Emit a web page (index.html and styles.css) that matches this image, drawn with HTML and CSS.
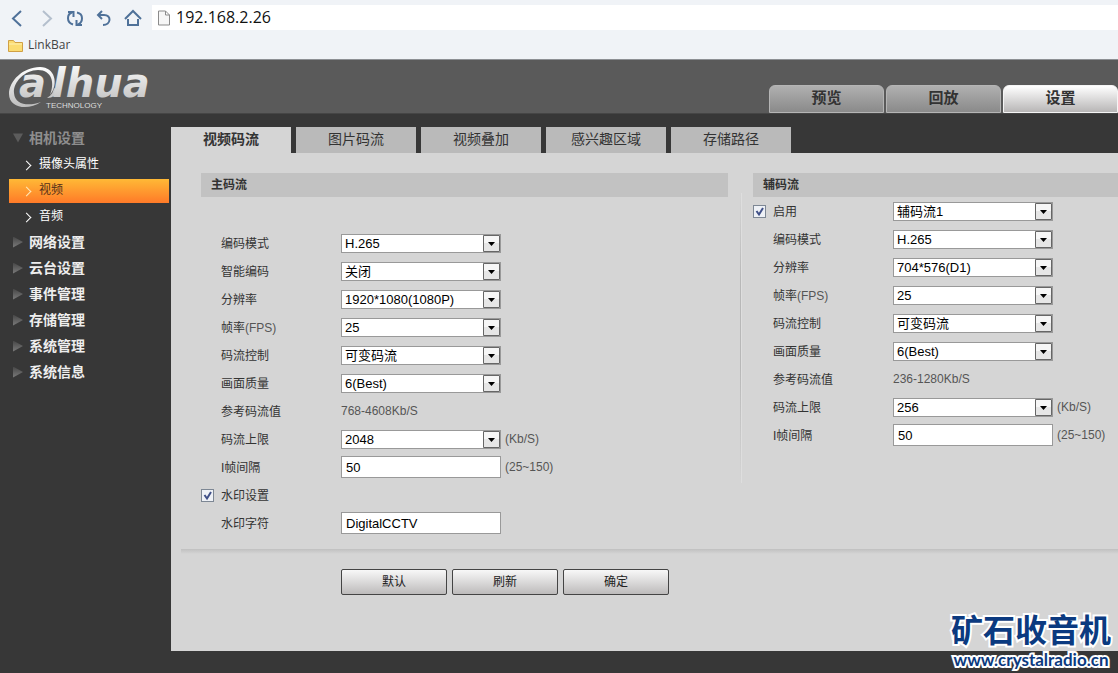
FILE: index.html
```html
<!DOCTYPE html>
<html lang="zh-CN">
<head>
	<meta charset="UTF-8">
	<meta name="viewport" content="width=device-width, initial-scale=1.0">
	<title>设置</title>
	<link rel="stylesheet" href="styles.css">
</head>
<body>
	<div class="browser">
		<div class="toolbar">
			<button class="tool" aria-label="后退"><svg width="20" height="20" viewBox="0 0 20 20"><path d="M14 3L6 10.500L14 18" stroke="#4f7199" stroke-width="2"/></svg></button>
			<button class="tool" aria-label="前进"><svg width="20" height="20" viewBox="0 0 20 20"><path d="M7 3L15 10.500L7 18" stroke="#b4bfcd" stroke-width="2"/></svg></button>
			<button class="tool" aria-label="刷新"><svg width="20" height="20" viewBox="0 0 20 20"><path d="M8 16.500C1 14 2 6 7 4.500M3 4H8.500V9M12 4.500C19 6 18 14 13 16.500M17 17H11.500V12" stroke="#4f7199" stroke-width="2"/></svg></button>
			<button class="tool" aria-label="恢复"><svg width="20" height="20" viewBox="0 0 20 20"><path d="M8 3L4 7L8 11M4 7H10C18 7 17 17 9 17" stroke="#4f7199" stroke-width="2"/></svg></button>
			<button class="tool" aria-label="主页"><svg width="20" height="20" viewBox="0 0 20 20"><path d="M2 11L10 3L18 11M5 11V17H15V11" stroke="#4f7199" stroke-width="2"/></svg></button>
			<div class="address">
				<svg width="12" height="16" viewBox="0 0 12 16"><path d="M.5 1H7.500L11.500 5V15H.5ZM7.500 1V5H11.500" fill="#f6f6f6" stroke="#8b8b8b"/></svg>
				<input class="url" type="text" aria-label="地址" value="192.168.2.26">
			</div>
		</div>
		<div class="bookmarks">
			<a class="bookmark" href="#">
				<svg width="15" height="13" viewBox="0 0 15 13"><path d="M.5 1.500H5.500L7 3.500H14.500V12.500H.5Z" fill="#fbdc72" stroke="#d0a045"/><path d="M1 5H14" stroke="#fff0b0"/></svg>
				LinkBar
			</a>
		</div>
	</div>

	<header class="header">
		<svg class="logo" width="144" height="46" viewBox="0 0 144 46" role="img" aria-label="alhua TECHNOLOGY">
			<defs>
				<linearGradient id="silver" x1="0" y1="0" x2="0" y2="1">
					<stop offset="0" stop-color="#fff"/>
					<stop offset="1" stop-color="#bdbdbd"/>
				</linearGradient>
			</defs>
			<path d="M42 31C51 20 47 3 32 3C15 3 1 17 1 30C1 44 20 47 33 38C22 42 7 42 6 29C5 18 17 6 30 6C44 6 47 19 42 31Z" fill="url(#silver)"/>
			<path d="M49 26C48 31 45 34 39 34C44 31 45 28 46 24Z" fill="#c8c8c8"/>
			<text class="logo-name" x="11" y="33" fill="url(#silver)">a<tspan x="44">lhua</tspan></text>
			<text class="logo-sub" x="38" y="44">TECHNOLOGY</text>
		</svg>
		<nav class="main-nav">
			<a class="main-tab" href="#">预览</a>
			<a class="main-tab" href="#">回放</a>
			<a class="main-tab active" href="#">设置</a>
		</nav>
	</header>

	<div class="page">
		<nav class="sidebar">
			<a class="menu open" href="#">相机设置</a>
			<a class="submenu" href="#">摄像头属性</a>
			<a class="submenu active" href="#">视频</a>
			<a class="submenu" href="#">音频</a>
			<a class="menu" href="#">网络设置</a>
			<a class="menu" href="#">云台设置</a>
			<a class="menu" href="#">事件管理</a>
			<a class="menu" href="#">存储管理</a>
			<a class="menu" href="#">系统管理</a>
			<a class="menu" href="#">系统信息</a>
		</nav>

		<main class="content">
			<nav class="tabs">
				<a class="tab active" href="#">视频码流</a>
				<a class="tab" href="#">图片码流</a>
				<a class="tab" href="#">视频叠加</a>
				<a class="tab" href="#">感兴趣区域</a>
				<a class="tab" href="#">存储路径</a>
			</nav>

			<form class="panel">
				<div class="streams">
					<section class="stream">
						<h2 class="title">主码流</h2>
						<div class="rows main-rows">
							<div class="row"><label for="mode">编码模式</label><select id="mode"><option>H.265</option></select></div>
							<div class="row"><label for="smart">智能编码</label><select id="smart"><option>关闭</option></select></div>
							<div class="row"><label for="size">分辨率</label><select id="size"><option>1920*1080(1080P)</option></select></div>
							<div class="row"><label for="fps">帧率<span class="unit">(FPS)</span></label><select id="fps"><option>25</option></select></div>
							<div class="row"><label for="control">码流控制</label><select id="control"><option>可变码流</option></select></div>
							<div class="row"><label for="quality">画面质量</label><select id="quality"><option>6(Best)</option></select></div>
							<div class="row"><span class="name">参考码流值</span><span class="unit">768-4608Kb/S</span></div>
							<div class="row"><label for="limit">码流上限</label><select id="limit"><option>2048</option></select><span class="unit">(Kb/S)</span></div>
							<div class="row"><label for="interval">I帧间隔</label><input class="text" type="text" id="interval" value="50"><span class="unit">(25~150)</span></div>
							<div class="row"><input class="check" type="checkbox" id="watermark" checked><label for="watermark">水印设置</label></div>
							<div class="row"><label for="chars">水印字符</label><input class="text" type="text" id="chars" value="DigitalCCTV"></div>
						</div>
					</section>
					<div class="divider"></div>
					<section class="stream sub">
						<h2 class="title">辅码流</h2>
						<div class="rows">
							<div class="row"><input class="check" type="checkbox" id="enable" checked><label for="enable">启用</label><select aria-label="辅码流"><option>辅码流1</option></select></div>
							<div class="row"><label for="mode2">编码模式</label><select id="mode2"><option>H.265</option></select></div>
							<div class="row"><label for="size2">分辨率</label><select id="size2"><option>704*576(D1)</option></select></div>
							<div class="row"><label for="fps2">帧率<span class="unit">(FPS)</span></label><select id="fps2"><option>25</option></select></div>
							<div class="row"><label for="control2">码流控制</label><select id="control2"><option>可变码流</option></select></div>
							<div class="row"><label for="quality2">画面质量</label><select id="quality2"><option>6(Best)</option></select></div>
							<div class="row"><span class="name">参考码流值</span><span class="unit">236-1280Kb/S</span></div>
							<div class="row"><label for="limit2">码流上限</label><select id="limit2"><option>256</option></select><span class="unit">(Kb/S)</span></div>
							<div class="row"><label for="interval2">I帧间隔</label><input class="text" type="text" id="interval2" value="50"><span class="unit">(25~150)</span></div>
						</div>
					</section>
				</div>
				<div class="line"></div>
				<div class="buttons">
					<button class="btn" type="button">默认</button>
					<button class="btn" type="button">刷新</button>
					<button class="btn" type="button">确定</button>
				</div>
			</form>
		</main>
	</div>

	<div class="stamp">
		<div class="stamp-name">矿石收音机</div>
		<div class="stamp-url">www.crystalradio.cn</div>
	</div>
</body>
</html>
```
FILE: styles.css
```css
* {
    box-sizing: border-box;
}
body {
    margin: 0;
    position: relative;
    min-height: 100vh;
    background-color: #373737;
    font-family: "Liberation Sans", "Noto Sans CJK SC", sans-serif;
    font-size: 12px;
    color: #333;
}
a {
    color: inherit;
    text-decoration: none;
}
/* browser bars */
.browser {
    height: 60px;
    background: #f0f3f7;
    border-bottom: 1px solid #8d9094;
    font-family: "Open Sans", sans-serif;
}
.toolbar {
    display: flex;
    align-items: center;
    gap: 9px;
    padding: 5px 0 0 7px;
}
.tool {
    width: 20px;
    height: 20px;
    padding: 0;
    border: none;
    background: none;
}
.tool svg {
    display: block;
    fill: none;
}
.address {
    flex: 1;
    display: flex;
    align-items: center;
    gap: 6px;
    height: 25px;
    padding-left: 6px;
    background: #fff;
}
.url {
    flex: 1;
    height: 25px;
    padding: 0 0 2px;
    border: none;
    background: none;
    font-family: inherit;
    font-size: 16px;
    color: #111;
}
.bookmarks {
    display: flex;
    padding: 6px 8px;
}
.bookmark {
    display: flex;
    align-items: center;
    gap: 5px;
    line-height: 18px;
    color: #444;
}
/* header */
.header {
    display: flex;
    justify-content: space-between;
    align-items: flex-end;
    height: 54px;
    background: #5a5a5a;
    border-bottom: 1px solid #454545;
    padding-left: 8px;
}
.logo {
    align-self: center;
    overflow: visible;
}
.logo-name {
    font: italic bold 40px "DejaVu Sans", sans-serif;
}
.logo-sub {
    font: 8px "Liberation Sans", sans-serif;
    fill: #ddd;
}
.main-nav {
    display: flex;
    gap: 2px;
}
.main-tab {
    width: 115px;
    height: 28px;
    line-height: 24px;
    border: 1px solid #b5b5b5;
    border-radius: 6px 6px 0 0;
    background: linear-gradient(#b0b0b0, #8a8a8a);
    text-align: center;
    font-size: 15px;
    font-weight: bold;
}
.main-tab.active {
    border-color: #f5f5f5;
    background: linear-gradient(#fff, #b8b6b6);
}
/* layout */
.page {
    display: flex;
    align-items: flex-start;
}
.sidebar {
    display: flex;
    flex-direction: column;
    width: 171px;
    padding: 12px 2px 12px 9px;
}
.menu,
.submenu {
    display: flex;
    align-items: center;
    line-height: 22px;
    color: #fff;
}
.menu {
    height: 26px;
    padding: 0 0 2px 4px;
    font-size: 14px;
    font-weight: bold;
    color: #eee;
}
.menu::before {
    content: "";
    width: 10px;
    height: 11px;
    margin-right: 6px;
    background: linear-gradient(#484848, #7c7c7c);
    clip-path: polygon(0 0, 100% 50%, 0 100%);
}
.menu.open {
    color: #8e8e8e;
}
.menu.open::before {
    background: #5c5c5c;
    clip-path: polygon(0 10%, 100% 10%, 50% 90%);
}
.submenu {
    height: 24px;
    margin: 1px 0;
    padding: 0 0 2px 14px;
}
.submenu::before {
    content: "";
    width: 6px;
    height: 6px;
    margin: 2px 9px 0 0;
    border: solid #fff;
    border-width: 1px 1px 0 0;
    transform: rotate(45deg);
}
.submenu.active {
    background: linear-gradient(#ffb936, #ff7a28);
    color: #54301a;
}
.submenu.active::before {
    border-color: #ffe9b8;
}
.content {
    flex: 1;
    min-width: 0;
    padding-top: 13px;
}
.tabs {
    display: flex;
    gap: 5px;
}
.tab {
    width: 120px;
    height: 26px;
    line-height: 24px;
    background: #bababa;
    text-align: center;
    font-size: 14px;
}
.tab.active {
    background: #d5d5d5;
    font-weight: bold;
}
.panel {
    padding: 20px 0 56px;
    background: #d5d5d5;
}
/* streams */
.streams {
    display: flex;
    padding-left: 30px;
}
.stream {
    flex: 1;
    min-width: 330px;
}
.stream.sub {
    flex: 0 0 365px;
}
.title {
    margin: 0;
    padding-left: 10px;
    line-height: 24px;
    background: #c2c2c2;
    font-size: 12px;
}
.divider {
    width: 2px;
    height: 290px;
    margin: 20px 11px 0 12px;
    background: linear-gradient(#d5d5d5, #b8b8b8 30%, #b8b8b8 60%, #d5d5d5);
    border-right: 1px solid #dedede;
}
.main-rows {
    padding-top: 32px;
}
.row {
    display: grid;
    grid-template-columns: 20px 120px 160px 1fr;
    align-items: center;
    height: 28px;
}
.row label,
.row .name {
    grid-column: 2;
    padding-bottom: 2px;
}
.row > .unit {
    padding-left: 4px;
}
.row .name + .unit {
    padding-left: 0;
}
.unit {
    color: #555;
}
select,
.text {
    width: 160px;
    border: 1px solid #999;
    border-radius: 0;
    background-color: #fff;
    font-family: inherit;
    font-size: 13px;
    color: #000;
}
select {
    appearance: none;
    height: 19px;
    padding: 0 18px 0 3px;
    background-image: url("data:image/svg+xml,%3Csvg xmlns='http://www.w3.org/2000/svg' width='17' height='17'%3E%3Cpath d='M.5 .5H16.5V16.5H.5Z' fill='%23e6e6e6' stroke='%23666'/%3E%3Cpath d='M1 1H16V8H1Z' fill='%23f6f6f6'/%3E%3Cpath d='M5 7H12L8.5 11Z'/%3E%3C/svg%3E");
    background-repeat: no-repeat;
    background-position: right center;
}
.text {
    height: 22px;
    padding: 0 4px;
}
.check {
    appearance: none;
    width: 13px;
    height: 13px;
    margin: 0;
    border: 1px solid #7d8794;
    background: #eef1f6 url("data:image/svg+xml,%3Csvg xmlns='http://www.w3.org/2000/svg' width='11' height='11'%3E%3Cpath d='M2.500 5L5 8.500L9 2' fill='none' stroke='%23405088' stroke-width='2'/%3E%3C/svg%3E") no-repeat;
}
.line {
    height: 5px;
    margin: 12px 0 15px 10px;
    background: linear-gradient(#c0c0c0, #d5d5d5);
}
/* buttons */
.buttons {
    display: flex;
    gap: 5px;
    padding-left: 170px;
}
.btn {
    width: 106px;
    height: 26px;
    padding: 0 0 3px;
    border: 1px solid #444;
    border-radius: 2px;
    background: linear-gradient(#f8f8f8, #bdbbbb);
    font-family: inherit;
    font-size: 12px;
    color: #222;
}
/* site stamp over the corner of the page */
.stamp {
    position: absolute;
    right: 7px;
    bottom: 3px;
    text-align: center;
    font-weight: bold;
    color: #0b3a80;
    -webkit-text-stroke: 4px #fff;
    paint-order: stroke fill;
}
.stamp-name {
    font-size: 32px;
    line-height: 38px;
}
.stamp-url {
    font-family: Lato, sans-serif;
    font-size: 17px;
    line-height: 20px;
}
```
